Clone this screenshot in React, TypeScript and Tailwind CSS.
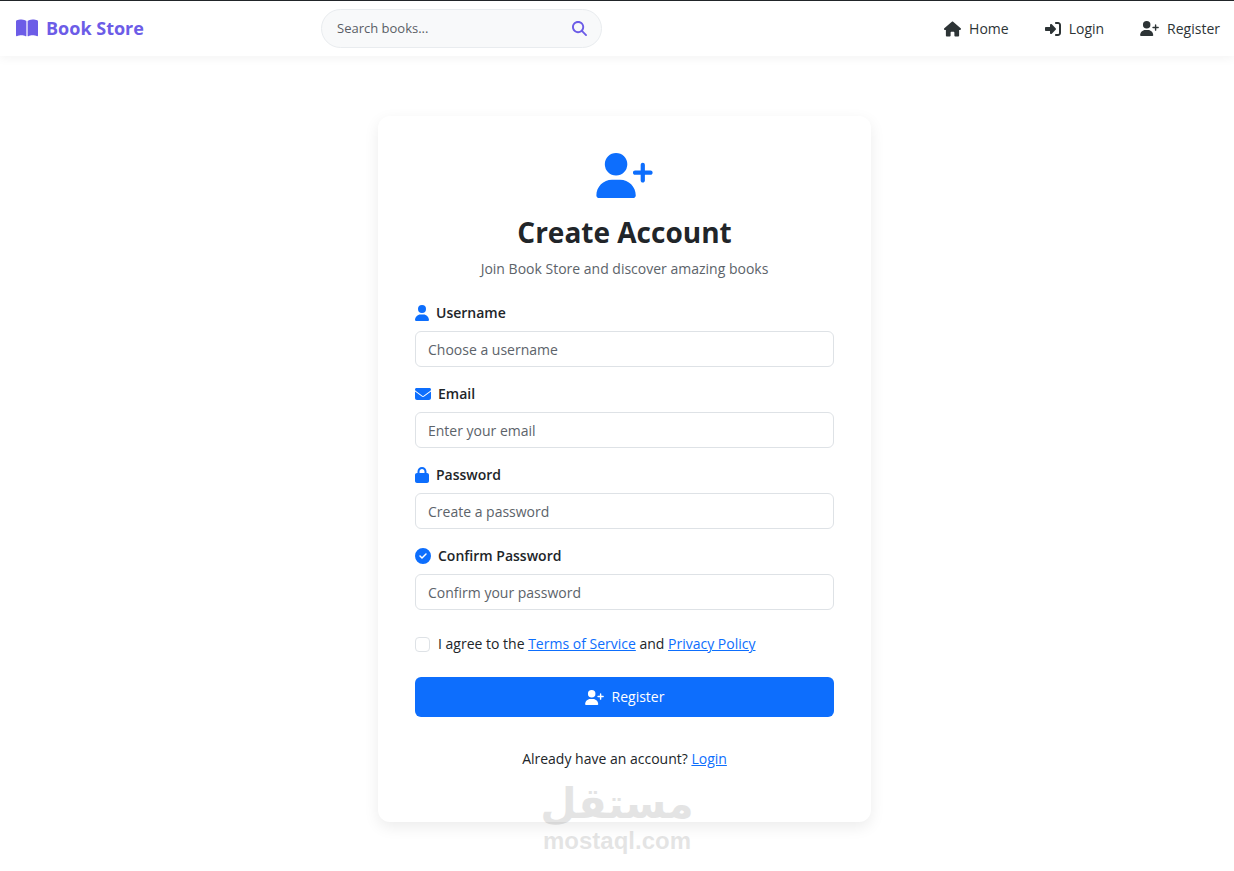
import type { ReactNode } from "react";
import {
  FaBookOpen,
  FaCircleCheck,
  FaEnvelope,
  FaHouse,
  FaLock,
  FaMagnifyingGlass,
  FaRightToBracket,
  FaUser,
  FaUserPlus,
} from "react-icons/fa6";

export default function App() {
  return (
    <div className="relative min-h-screen bg-white font-['Segoe_UI','Open_Sans',sans-serif] text-sm text-[#212529]">
      <Navbar />
      <main className="flex justify-center pt-[60px] pb-12 pl-[15px]">
        <RegisterCard />
      </main>
      <Watermark />
    </div>
  );
}

function Navbar() {
  return (
    <header className="flex h-14 items-center border-t border-[#212529] bg-white px-4 shadow-[0_2px_10px_rgba(0,0,0,0.05)]">
      <div className="w-[305px] shrink-0">
        <a href="#" className="inline-flex items-center gap-2 text-lg font-bold text-[#6c5ce7]">
          <FaBookOpen className="h-5 w-[22px]" />
          Book Store
        </a>
      </div>

      <form
        role="search"
        className="flex h-[39px] w-[281px] items-center rounded-full border border-[#e9ecef] bg-[#f8f9fa] pr-3.5 pl-[15px]"
      >
        <input
          type="search"
          aria-label="Search books"
          placeholder="Search books..."
          className="min-w-0 flex-1 bg-transparent text-[13px] outline-none placeholder:text-[#5a5e66]"
        />
        <button type="button" aria-label="Search" className="text-[#6c5ce7]">
          <FaMagnifyingGlass className="size-[15px]" />
        </button>
      </form>

      <nav className="-mr-0.5 ml-auto flex items-center gap-9 text-[#2d3436]">
        <NavLink icon={<FaHouse className="h-4 w-[17px]" />} label="Home" />
        <NavLink icon={<FaRightToBracket className="size-4" />} label="Login" />
        <NavLink icon={<FaUserPlus className="h-[15px] w-[19px]" />} label="Register" />
      </nav>
    </header>
  );
}

function NavLink({ icon, label }: { icon: ReactNode; label: string }) {
  return (
    <a href="#" className="flex items-center gap-2">
      {icon}
      {label}
    </a>
  );
}

function RegisterCard() {
  return (
    <section className="w-full max-w-[493px] rounded-xl bg-white px-[37px] pt-[37px] pb-[52px] shadow-[0_5px_15px_rgba(0,0,0,0.08)]">
      <div className="flex flex-col items-center text-center">
        <FaUserPlus className="h-[45px] w-[57px] text-[#0d6efd]" />
        <h1 className="mt-4 text-[28px] leading-9 font-bold">Create Account</h1>
        <p className="mt-2 leading-[22px] text-[#5c636a]">
          Join Book Store and discover amazing books
        </p>
      </div>

      <form className="mt-[22px]">
        <div className="space-y-4">
          <Field
            id="username"
            icon={<FaUser className="h-4 w-3.5" />}
            label="Username"
            placeholder="Choose a username"
          />
          <Field
            id="email"
            type="email"
            icon={<FaEnvelope className="size-4" />}
            label="Email"
            placeholder="Enter your email"
          />
          <Field
            id="password"
            type="password"
            icon={<FaLock className="h-4 w-3.5" />}
            label="Password"
            placeholder="Create a password"
          />
          <Field
            id="confirm-password"
            type="password"
            icon={<FaCircleCheck className="size-4" />}
            label="Confirm Password"
            placeholder="Confirm your password"
          />
        </div>

        <div className="mt-[23px] flex items-center gap-2 leading-[22px]">
          <input
            id="terms"
            type="checkbox"
            className="size-[15px] appearance-none rounded border border-[#dee2e6] bg-white checked:bg-[#0d6efd]"
          />
          <label htmlFor="terms">
            I agree to the <TextLink>Terms of Service</TextLink> and{" "}
            <TextLink>Privacy Policy</TextLink>
          </label>
        </div>

        <button
          type="submit"
          className="mt-[22px] flex h-10 w-full items-center justify-center gap-2 rounded-md bg-[#0d6efd] text-white"
        >
          <FaUserPlus className="h-[15px] w-[19px]" />
          Register
        </button>
      </form>

      <p className="mt-[31px] text-center leading-[22px]">
        Already have an account? <TextLink>Login</TextLink>
      </p>
    </section>
  );
}

function Field({
  id,
  type = "text",
  icon,
  label,
  placeholder,
}: {
  id: string;
  type?: string;
  icon: ReactNode;
  label: string;
  placeholder: string;
}) {
  return (
    <div>
      <label htmlFor={id} className="flex items-center gap-[7px] leading-[22px] font-semibold">
        <span className="text-[#0d6efd]">{icon}</span>
        {label}
      </label>
      <input
        id={id}
        type={type}
        placeholder={placeholder}
        className="mt-[7px] h-9 w-full rounded-md border border-[#dee2e6] bg-white px-3 outline-none placeholder:text-[#5c636a]"
      />
    </div>
  );
}

function TextLink({ children }: { children: ReactNode }) {
  return (
    <a href="#" className="text-[#0d6efd] underline">
      {children}
    </a>
  );
}

/* Site stamp, laid over the bottom edge of the card */
function Watermark() {
  return (
    <div className="pointer-events-none absolute bottom-4 left-1/2 flex -translate-x-1/2 flex-col items-center font-bold text-black opacity-10">
      <span lang="ar" dir="rtl" className="font-['DejaVu_Sans',sans-serif] text-[42px] leading-[46px]">
        مستقل
      </span>
      <span className="font-['Liberation_Sans',sans-serif] text-2xl leading-7">mostaql.com</span>
    </div>
  );
}
